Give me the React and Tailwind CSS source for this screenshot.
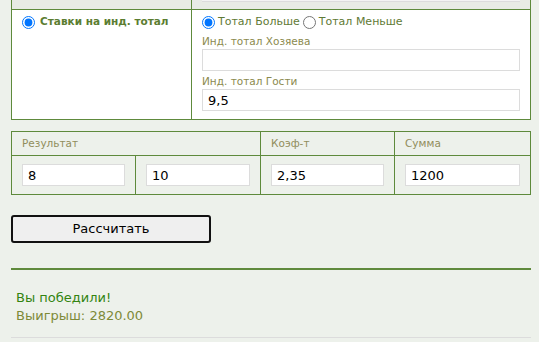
import React, { useState } from 'react';

const inputCls =
  'block w-full h-[22px] border border-[#dcdcdc] bg-white px-[5px] text-[13px] text-black outline-none';

export default function App() {
  const [side, setSide] = useState('over');
  const [home, setHome] = useState('');
  const [guest, setGuest] = useState('9,5');
  const [score1, setScore1] = useState('8');
  const [score2, setScore2] = useState('10');
  const [coef, setCoef] = useState('2,35');
  const [sum, setSum] = useState('1200');

  return (
    <div className="min-h-[342px] bg-[#edf1eb] pl-[11px] pr-[8px] font-['DejaVu_Sans',Verdana,sans-serif]">
      {/* Ставки на инд. тотал */}
      <div className="border-x border-b border-[#5e8a3c]">
        <div className="grid grid-cols-[180px_1fr] h-[10px] bg-[#e8ebe5] border-b border-[#5e8a3c]">
          <div className="border-r border-[#5e8a3c]" />
          <div className="px-[10px]">
            <div className="h-[2px] border-b border-[#dcdcdc] bg-[#f3f3f3]" />
          </div>
        </div>
        <div className="grid grid-cols-[180px_1fr] bg-white">
          <div className="border-r border-[#5e8a3c] pl-[10px] pt-[4px]">
            <label className="flex items-center h-[16px] gap-[5px] text-[10.5px] font-bold text-[#5b7d31]">
              <input type="radio" defaultChecked className="m-0 w-[13px] h-[13px]" />
              Ставки на инд. тотал
            </label>
          </div>
          <div className="px-[10px] pt-[4px] pb-[8px]">
            <div className="flex items-center h-[16px] text-[11px] text-[#5f7a35]">
              <label className="flex items-center gap-[3px]">
                <input
                  type="radio"
                  name="side"
                  checked={side === 'over'}
                  onChange={() => setSide('over')}
                  className="m-0 w-[13px] h-[13px]"
                />
                Тотал Больше
              </label>
              <label className="flex items-center gap-[3px] ml-[3px]">
                <input
                  type="radio"
                  name="side"
                  checked={side === 'under'}
                  onChange={() => setSide('under')}
                  className="m-0 w-[13px] h-[13px]"
                />
                Тотал Меньше
              </label>
            </div>
            <div className="mt-[4px] text-[10.5px] text-[#8b8a4e] leading-[14px]">Инд. тотал Хозяева</div>
            <input className={`${inputCls} mt-[1px]`} value={home} onChange={e => setHome(e.target.value)} />
            <div className="mt-[3px] text-[10.5px] text-[#8b8a4e] leading-[14px]">Инд. тотал Гости</div>
            <input className={`${inputCls} mt-[1px]`} value={guest} onChange={e => setGuest(e.target.value)} />
          </div>
        </div>
      </div>

      {/* Результат / Коэф-т / Сумма */}
      <div className="mt-[11px] border border-[#5e8a3c] text-[10.5px] text-[#918d5c]">
        <div className="grid grid-cols-[249px_134px_1fr] h-[24px] border-b border-[#5e8a3c]">
          <div className="border-r border-[#5e8a3c] pl-[10px] flex items-center">Результат</div>
          <div className="border-r border-[#5e8a3c] pl-[10px] flex items-center">Коэф-т</div>
          <div className="pl-[10px] flex items-center">Сумма</div>
        </div>
        <div className="grid grid-cols-[124px_125px_134px_1fr] h-[38px]">
          <div className="border-r border-[#5e8a3c] px-[10px] flex items-center">
            <input className={inputCls} value={score1} onChange={e => setScore1(e.target.value)} />
          </div>
          <div className="border-r border-[#5e8a3c] px-[10px] flex items-center">
            <input className={inputCls} value={score2} onChange={e => setScore2(e.target.value)} />
          </div>
          <div className="border-r border-[#5e8a3c] px-[10px] flex items-center">
            <input className={inputCls} value={coef} onChange={e => setCoef(e.target.value)} />
          </div>
          <div className="px-[10px] flex items-center">
            <input className={inputCls} value={sum} onChange={e => setSum(e.target.value)} />
          </div>
        </div>
      </div>

      <button className="mt-[20px] block w-[200px] h-[28px] rounded-[3px] border-2 border-[#111] bg-[#efefef] text-[13px] text-black">
        Рассчитать
      </button>

      <div className="mt-[25px] h-[2px] bg-[#5f8a3c]" />

      <div className="pt-[19px] pl-[5px] pb-[12px] text-[13px] leading-[18px]">
        <div className="text-[#338410]">Вы победили!</div>
        <div className="text-[#7d8a38]">Выигрыш: 2820.00</div>
      </div>

      <div className="h-px bg-[#dcdcdc]" />
    </div>
  );
}
